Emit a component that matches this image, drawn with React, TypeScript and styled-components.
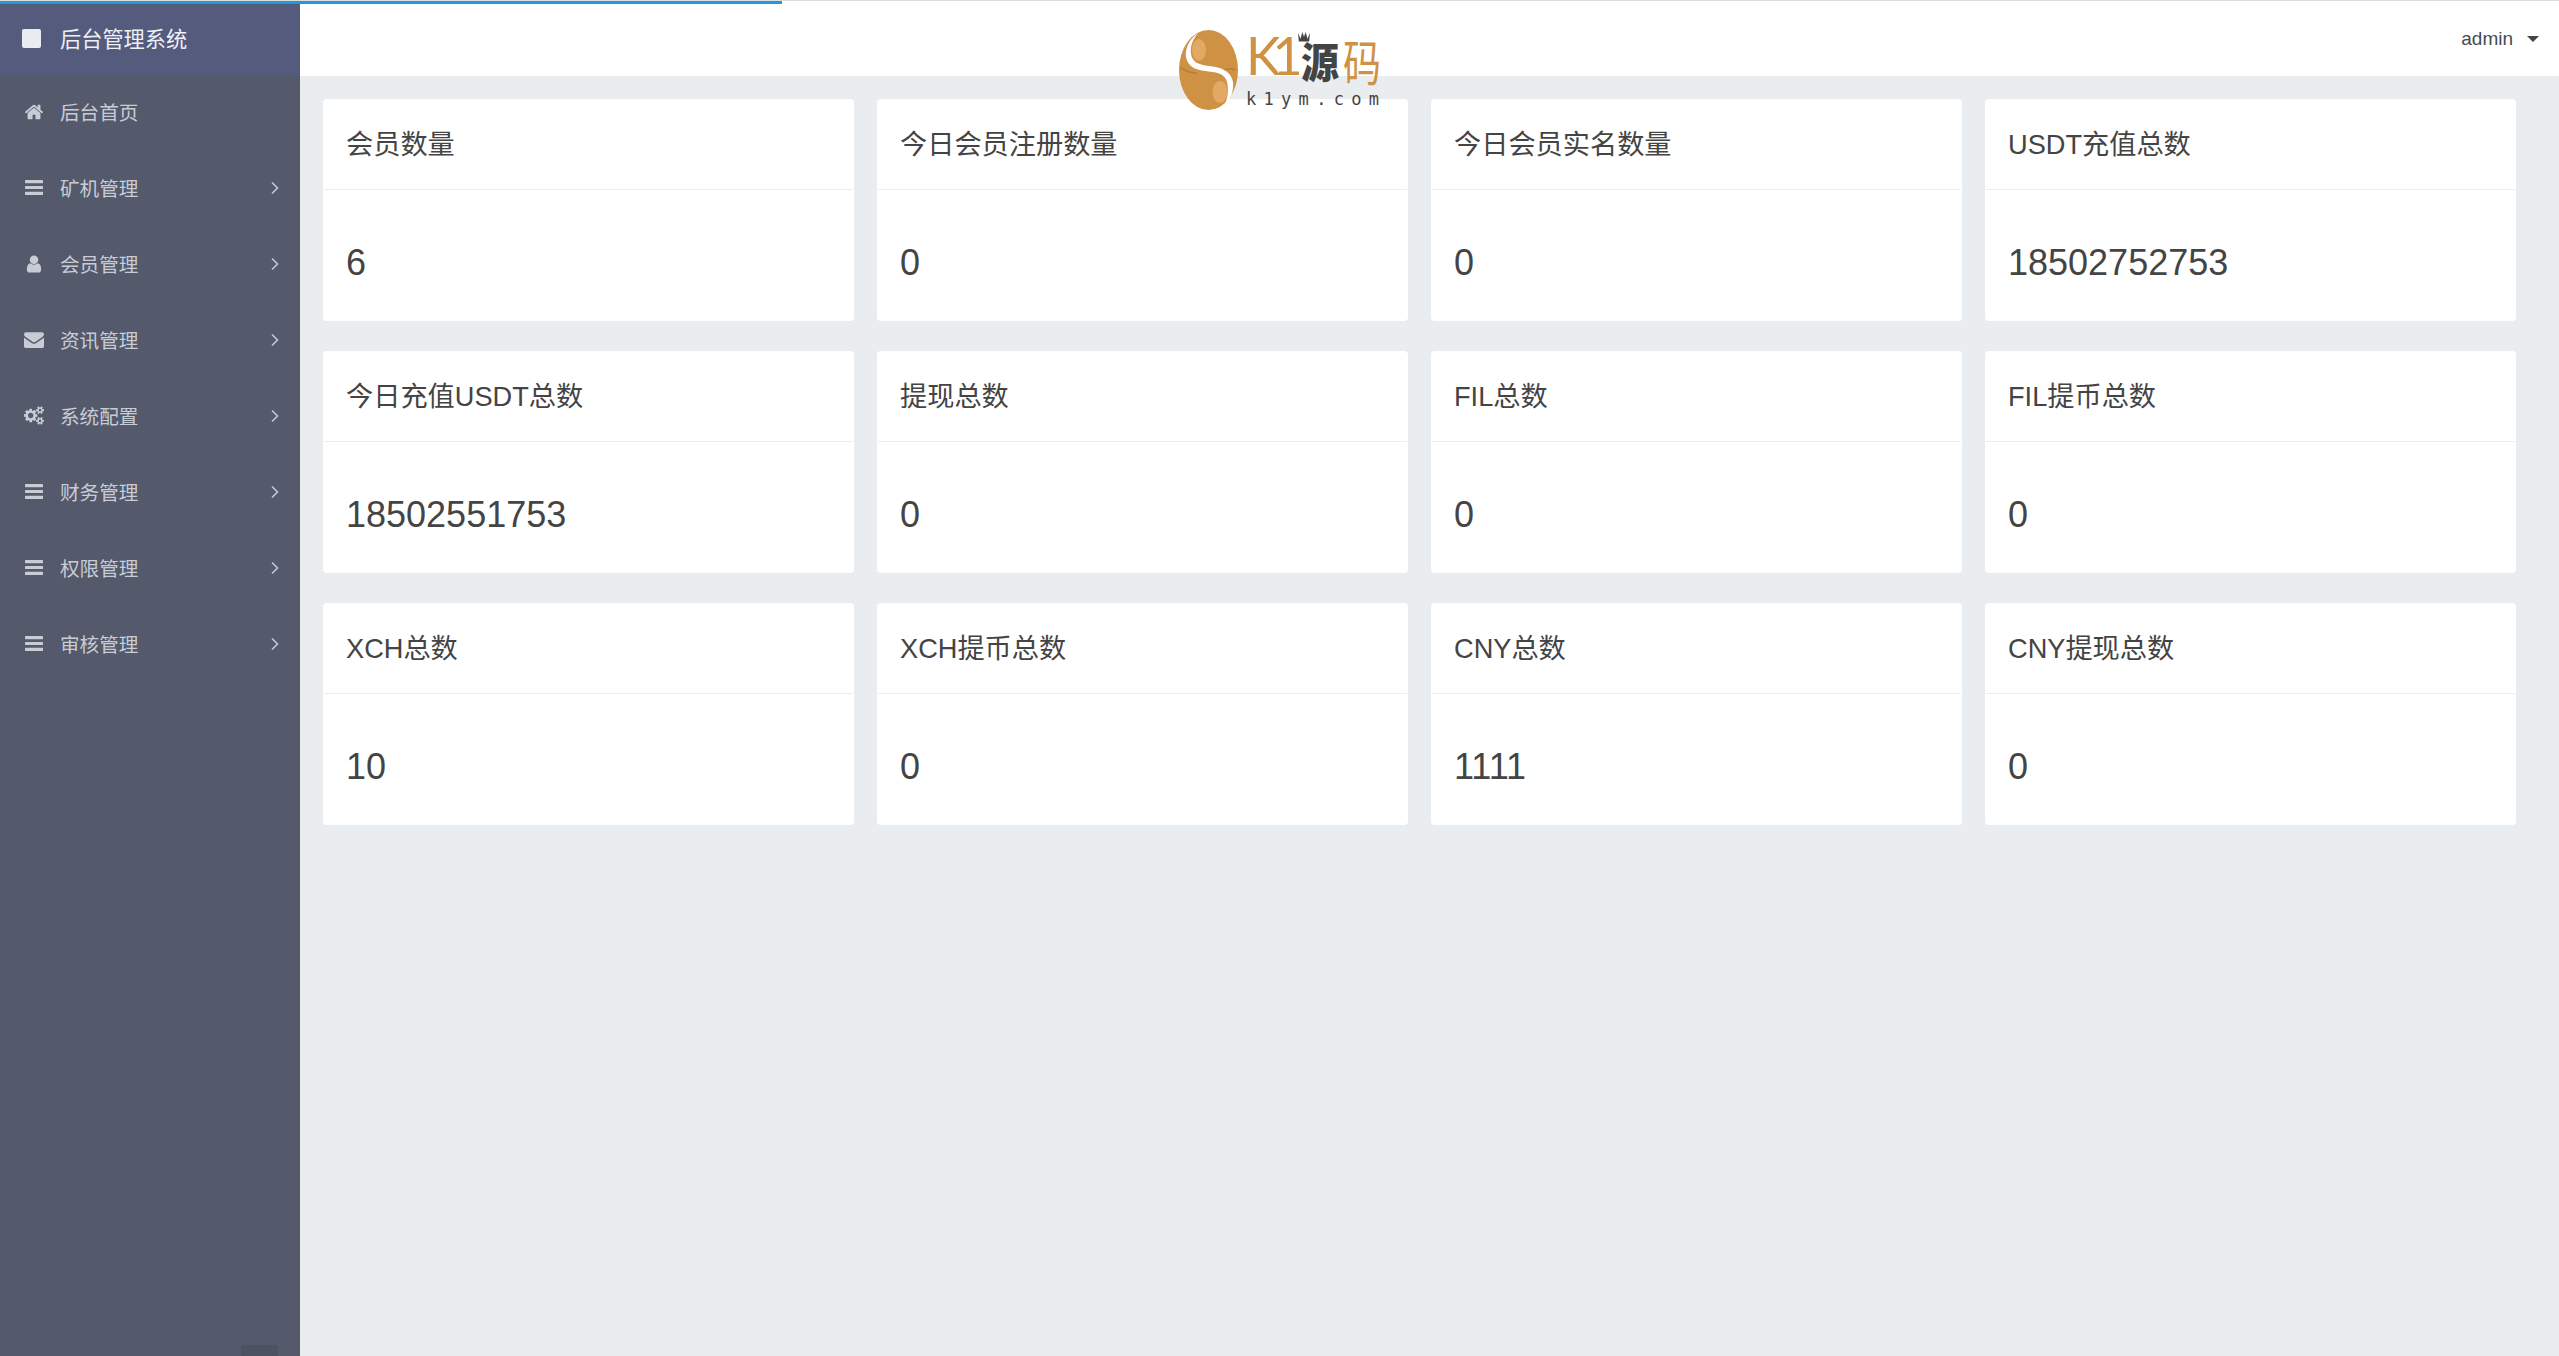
import React from "react";
import styled, { createGlobalStyle } from "styled-components";

const stats = [
  { title: "会员数量", value: "6" },
  { title: "今日会员注册数量", value: "0" },
  { title: "今日会员实名数量", value: "0" },
  { title: "USDT充值总数", value: "18502752753" },
  { title: "今日充值USDT总数", value: "18502551753" },
  { title: "提现总数", value: "0" },
  { title: "FIL总数", value: "0" },
  { title: "FIL提币总数", value: "0" },
  { title: "XCH总数", value: "10" },
  { title: "XCH提币总数", value: "0" },
  { title: "CNY总数", value: "1111" },
  { title: "CNY提现总数", value: "0" },
];

const HomeIcon = () => (
  <svg viewBox="0 0 1792 1792" width="20" height="20" fill="currentColor">
    <path d="M1472 992v480q0 26-19 45t-45 19h-384v-384h-256v384h-384q-26 0-45-19t-19-45v-480q0-1 .5-3t.5-3l575-474 575 474q1 2 1 6zm223-69l-62 74q-8 9-21 11h-3q-13 0-21-7l-692-577-692 577q-12 8-24 7-13-2-21-11l-62-74q-8-10-7-23.500t11-21.500l719-599q32-26 76-26t76 26l244 204v-195q0-14 9-23t23-9h192q14 0 23 9t9 23v408l219 182q10 8 11 21.500t-7 23.500z" />
  </svg>
);
const BarsIcon = () => (
  <svg viewBox="0 0 18 15" width="18" height="15" fill="currentColor">
    <rect x="0" y="0" width="18" height="3.200" rx="0.6" />
    <rect x="0" y="5.900" width="18" height="3.200" rx="0.6" />
    <rect x="0" y="11.800" width="18" height="3.200" rx="0.6" />
  </svg>
);
const UserIcon = () => (
  <svg viewBox="0 0 1792 1792" width="22" height="22" fill="currentColor">
    <path d="M1536 1399q0 109-62.500 187t-150.500 78h-854q-88 0-150.500-78t-62.500-187q0-85 8.500-160.500t31.500-152 58.500-131 94-89 134.500-34.500q131 128 313 128t313-128q76 0 134.500 34.500t94 89 58.500 131 31.500 152 8.500 160.500zm-256-887q0 159-112.500 271.500t-271.500 112.500-271.500-112.500-112.500-271.500 112.500-271.500 271.500-112.500 271.500 112.500 112.500 271.500z" />
  </svg>
);
const MailIcon = () => (
  <svg viewBox="0 0 1792 1792" width="21" height="21" fill="currentColor">
    <path d="M1792 710v794q0 66-47 113t-113 47h-1472q-66 0-113-47t-47-113v-794q44 49 101 87 362 246 497 345 57 42 92.500 65.500t94.500 48 110 24.500h2q51 0 110-24.500t94.500-48 92.500-65.500q170-123 498-345 57-39 100-87zm0-294q0 79-49 151t-122 123q-376 261-468 325-10 7-42.500 30.500t-54 38-52 32.500-57.500 27-50 9h-2q-23 0-50-9t-57.500-27-52-32.500-54-38-42.500-30.500q-91-64-262-182.500t-205-142.500q-62-42-117-115.500t-55-136.500q0-78 41.500-130t118.500-52h1472q65 0 112.500 47t47.500 113z" />
  </svg>
);
const CogsIcon = () => (
  <svg viewBox="0 0 1920 1792" width="23" height="21" fill="currentColor">
    <path d="M896 896q0-106-75-181t-181-75-181 75-75 181 75 181 181 75 181-75 75-181zm768 512q0-52-38-90t-90-38-90 38-38 90q0 53 37.500 90.500t90.500 37.500 90.500-37.500 37.500-90.500zm0-1024q0-52-38-90t-90-38-90 38-38 90q0 53 37.500 90.500t90.500 37.500 90.500-37.500 37.500-90.500zm-384 421v185q0 10-7 19.500t-16 10.500l-155 24q-11 35-32 76 34 48 90 115 7 11 7 20 0 12-7 19-23 30-82.500 89.500t-78.500 59.500q-11 0-21-7l-115-90q-37 19-77 31-11 108-23 155-7 24-30 24h-186q-11 0-20-7.500t-10-17.500l-23-153q-34-10-75-31l-118 89q-7 7-20 7-11 0-21-8-144-133-144-160 0-9 7-19 10-14 41-53t47-61q-23-44-35-82l-152-24q-10-1-17-9.500t-7-19.500v-185q0-10 7-19.500t16-10.500l155-24q11-35 32-76-34-48-90-115-7-11-7-20 0-12 7-20 22-30 82-89t79-59q11 0 21 7l115 90q34-18 77-32 11-108 23-154 7-24 30-24h186q11 0 20 7.500t10 17.500l23 153q34 10 75 31l118-89q8-7 20-7 11 0 21 8 144 133 144 160 0 8-7 19-12 16-42 54t-45 60q23 48 34 82l152 23q10 2 17 10.500t7 19.500zm640 533v140q0 16-149 31-12 27-30 52 51 113 51 138 0 4-4 7-122 71-124 71-8 0-46-47t-52-68q-20 2-30 2t-30-2q-14 21-52 68t-46 47q-2 0-124-71-4-3-4-7 0-25 51-138-18-25-30-52-149-15-149-31v-140q0-16 149-31 13-29 30-52-51-113-51-138 0-4 4-7 4-2 35-20t59-34 30-16q8 0 46 46.500t52 67.500q20-2 30-2t30 2q51-71 92-112l6-2q4 0 124 70 4 3 4 7 0 25-51 138 17 23 30 52 149 15 149 31zm0-1024v140q0 16-149 31-12 27-30 52 51 113 51 138 0 4-4 7-122 71-124 71-8 0-46-47t-52-68q-20 2-30 2t-30-2q-14 21-52 68t-46 47q-2 0-124-71-4-3-4-7 0-25 51-138-18-25-30-52-149-15-149-31v-140q0-16 149-31 13-29 30-52-51-113-51-138 0-4 4-7 4-2 35-20t59-34 30-16q8 0 46 46.500t52 67.500q20-2 30-2t30 2q51-71 92-112l6-2q4 0 124 70 4 3 4 7 0 25-51 138 17 23 30 52 149 15 149 31z" />
  </svg>
);

const menu = [
  { label: "后台首页", icon: <HomeIcon />, arrow: false },
  { label: "矿机管理", icon: <BarsIcon />, arrow: true },
  { label: "会员管理", icon: <UserIcon />, arrow: true },
  { label: "资讯管理", icon: <MailIcon />, arrow: true },
  { label: "系统配置", icon: <CogsIcon />, arrow: true },
  { label: "财务管理", icon: <BarsIcon />, arrow: true },
  { label: "权限管理", icon: <BarsIcon />, arrow: true },
  { label: "审核管理", icon: <BarsIcon />, arrow: true },
];

export default function App() {
  return (
    <Page>
      <GlobalStyle />
      <Sidebar>
        <Brand>
          <BrandMark />
          <BrandName>后台管理系统</BrandName>
        </Brand>
        {menu.map((item) => (
          <MenuRow key={item.label}>
            <MenuIcon>{item.icon}</MenuIcon>
            <MenuLabel>{item.label}</MenuLabel>
            {item.arrow && (
              <Arrow viewBox="0 0 8 14" width="8" height="14">
                <path d="M1 1.500 L6.500 7 L1 12.500" fill="none" stroke="currentColor" strokeWidth="1.600" />
              </Arrow>
            )}
          </MenuRow>
        ))}
        <ScrollHandle />
      </Sidebar>
      <Main>
        <TopBar>
          <UserName>admin</UserName>
          <Caret />
        </TopBar>
        <Grid>
          {stats.map((s) => (
            <Card key={s.title}>
              <CardTitle>{s.title}</CardTitle>
              <CardValue>{s.value}</CardValue>
            </Card>
          ))}
        </Grid>
      </Main>
      <Logo>
        <svg viewBox="0 0 59 80" width="59" height="80">
          <ellipse cx="29.500" cy="40" rx="29.500" ry="40" fill="#cf9144" />
          <ellipse cx="20" cy="20" rx="7" ry="11" fill="#e2a964" />
          <ellipse cx="41" cy="62" rx="7.500" ry="11" fill="#e2a964" />
          <path d="M1 37 Q8 43 18 43 M56 40 Q50 37 44 41" fill="none" stroke="#b8793a" strokeWidth="1.500" />
          <path d="M19 3 C9 10 6 20 7 27 C9 37 17 40 26 41 C36 42 46 43 48 52 C50 60 49 70 44 77 C52 70 55 60 54 52 C52 40 40 37 30 36 C20 35 13 32 12 24 C11 16 14 9 19 3 Z" fill="#fff" />
        </svg>
        <LogoText>
          <LogoTop>
            <LogoLatin>K1</LogoLatin>
            <LogoDark>
              源
              <Crown viewBox="0 0 16 14" width="14" height="12">
                <path d="M1 4 L4 10 L6 3 L8 8 L10 3 L12 10 L15 4 L14 13 H2 Z" fill="#444" />
              </Crown>
            </LogoDark>
            <LogoOrange>码</LogoOrange>
          </LogoTop>
          <LogoUrl>k1ym.com</LogoUrl>
        </LogoText>
      </Logo>
      <Progress />
    </Page>
  );
}

const GlobalStyle = createGlobalStyle`
  html, body {
    margin: 0;
    padding: 0;
    height: 100%;
    background: #e9edf0;
    font-family: "Liberation Sans", "Noto Sans CJK SC", sans-serif;
    overflow: hidden;
  }
`;
const Page = styled.div`
  position: relative;
  display: flex;
  width: 2559px;
  height: 1356px;
  border-top: 1px solid #dddddd;
  box-sizing: border-box;
`;
const Progress = styled.div`
  position: absolute;
  left: 0;
  top: 0;
  width: 782px;
  height: 3px;
  background: #2299dd;
`;
const Sidebar = styled.aside`
  position: relative;
  width: 300px;
  flex: none;
  background: #545a6b;
`;
const Brand = styled.div`
  display: flex;
  align-items: center;
  height: 75px;
  padding-left: 22px;
  background: #555b7c;
`;
const BrandMark = styled.span`
  width: 19px;
  height: 19px;
  border-radius: 2px;
  background: #e9ebf0;
`;
const BrandName = styled.span`
  margin: 0 0 3px 19px;
  font-size: 21.200px;
  color: #eef0f5;
`;
const MenuRow = styled.div`
  display: flex;
  align-items: center;
  box-sizing: border-box;
  height: 76px;
  padding: 0 0 5px 24px;
  color: #c8ccd5;
`;
const MenuIcon = styled.span`
  display: flex;
  align-items: center;
  justify-content: center;
  width: 20px;
  height: 22px;
`;
const MenuLabel = styled.span`
  flex: 1;
  margin: 0 0 1px 16px;
  font-size: 19.600px;
`;
const Arrow = styled.svg`
  margin-right: 21px;
  color: #bccad8;
`;
const ScrollHandle = styled.div`
  position: absolute;
  left: 241px;
  bottom: 0;
  width: 37px;
  height: 11px;
  border-radius: 3px 3px 0 0;
  background: #4d5262;
`;
const Main = styled.main`
  flex: 1;
  min-width: 0;
`;
const TopBar = styled.header`
  display: flex;
  align-items: center;
  justify-content: flex-end;
  height: 75px;
  padding-right: 20px;
  background: #fff;
`;
const UserName = styled.span`
  font-size: 19px;
  color: #444b55;
`;
const Caret = styled.span`
  margin-left: 14px;
  border-top: 6px solid #444;
  border-left: 6px solid transparent;
  border-right: 6px solid transparent;
`;
const Grid = styled.div`
  display: grid;
  grid-template-columns: repeat(4, 531px);
  grid-auto-rows: 222px;
  gap: 30px 23px;
  padding: 23px 0 0 23px;
`;
const Card = styled.section`
  display: flex;
  flex-direction: column;
  padding: 1px;
  border-radius: 4px;
  background: #fff;
`;
const CardTitle = styled.div`
  display: flex;
  align-items: center;
  box-sizing: border-box;
  height: 90px;
  padding: 0 22px 5px;
  border-bottom: 1px solid #e9edf0;
  font-size: 27.200px;
  color: #444;
`;
const CardValue = styled.div`
  flex: 1;
  padding: 52px 22px 0;
  font-size: 36px;
  line-height: 42px;
  color: #444;
`;
const Logo = styled.div`
  position: absolute;
  left: 1179px;
  top: 29px;
  display: flex;
  gap: 8px;
`;
const LogoText = styled.div`
  display: flex;
  flex-direction: column;
`;
const LogoTop = styled.div`
  display: flex;
  align-items: center;
  height: 60px;
  font-size: 38px;
  line-height: 1;
  color: #cf9144;
`;
const LogoLatin = styled.span`
  width: 55px;
  margin-bottom: 10px;
  font-family: Lato, "Liberation Sans", sans-serif;
  font-weight: 400;
  font-size: 52px;
  letter-spacing: -8px;
`;
const LogoDark = styled.span`
  position: relative;
  display: inline-block;
  margin-right: 4px;
  font-family: "Noto Sans CJK SC", sans-serif;
  font-weight: 900;
  color: #444;
  transform: scaleY(1.1);
`;
const LogoOrange = styled.span`
  display: inline-block;
  font-family: "Noto Sans CJK SC", sans-serif;
  transform: scaleY(1.3);
`;
const Crown = styled.svg`
  position: absolute;
  left: -4px;
  top: -9px;
`;
const LogoUrl = styled.div`
  margin-top: -1px;
  font-family: "DejaVu Sans Mono", monospace;
  font-size: 17px;
  letter-spacing: 7.300px;
  color: #444;
`;
